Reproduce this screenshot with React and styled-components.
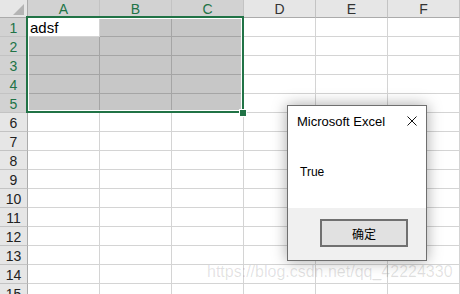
import React from 'react';
import styled, { createGlobalStyle } from 'styled-components';

const Global = createGlobalStyle`
  html, body { margin: 0; padding: 0; background: #fff; }
  body { overflow: hidden; }
`;

const GREEN = '#217346';

const Screen = styled.div`
  position: relative;
  width: 460px;
  height: 294px;
  overflow: hidden;
  background: #fff;
  font-family: "Liberation Sans", Arial, sans-serif;
`;

const SheetArea = styled.div`
  position: relative;
`;

const Sheet = styled.div`
  display: grid;
  grid-template-columns: 28px repeat(6, 72px);
  grid-template-rows: 18px;
  grid-auto-rows: 19px;
`;

const Corner = styled.div`
  box-sizing: border-box;
  background: #e6e6e6;
  border-right: 1px solid #ababab;
  border-bottom: 1px solid #ababab;
  display: flex;
  align-items: flex-end;
  justify-content: flex-end;
  padding: 0 3px 2px 0;
`;

const ColHead = styled.div`
  box-sizing: border-box;
  background: ${p => (p.$sel ? '#d2d2d2' : '#e6e6e6')};
  color: ${p => (p.$sel ? GREEN : '#333')};
  border-right: 1px solid #c3c3c3;
  border-bottom: 1px solid #ababab;
  display: flex;
  align-items: center;
  justify-content: center;
  font-size: 14px;
  line-height: 1;
  padding-top: 1px;
`;

const RowHead = styled.div`
  box-sizing: border-box;
  background: ${p => (p.$sel ? '#d2d2d2' : '#e6e6e6')};
  color: ${p => (p.$sel ? GREEN : '#222')};
  border-right: 1px solid #ababab;
  border-bottom: 1px solid #c3c3c3;
  display: flex;
  align-items: center;
  justify-content: center;
  font-size: 14px;
  line-height: 1;
  padding-top: 1px;
`;

const Cell = styled.div`
  box-sizing: border-box;
  background: #fff;
  border-right: 1px solid #d4d4d4;
  border-bottom: 1px solid #d4d4d4;
  display: flex;
  align-items: flex-end;
  padding: 0 0 1px 2px;
  font-size: 15px;
  line-height: 1;
  color: #000;
  position: ${p => (p.$active ? 'relative' : 'static')};
  z-index: ${p => (p.$active ? 2 : 'auto')};
`;

const Shade = styled.div`
  position: absolute;
  left: 26px;
  top: 16px;
  width: 218px;
  height: 97px;
  background: rgba(0, 0, 0, 0.22);
  z-index: 1;
`;

const Frame = styled.div`
  position: absolute;
  box-sizing: border-box;
  left: 26px;
  top: 16px;
  width: 218px;
  height: 97px;
  border: 2px solid ${GREEN};
  box-shadow: inset 0 0 0 1px #fff;
  z-index: 3;
`;

const Handle = styled.div`
  position: absolute;
  box-sizing: border-box;
  left: 239px;
  top: 109px;
  width: 8px;
  height: 8px;
  background: ${GREEN};
  border: 1px solid #fff;
  z-index: 4;
`;

const Dialog = styled.div`
  position: absolute;
  box-sizing: border-box;
  left: 287px;
  top: 105px;
  width: 140px;
  height: 156px;
  background: #fff;
  border: 1px solid #6f6f6f;
  box-shadow: 0 0 14px rgba(0, 0, 0, 0.35);
  display: flex;
  flex-direction: column;
  z-index: 5;
`;

const TitleBar = styled.div`
  height: 30px;
  display: flex;
  align-items: center;
  justify-content: space-between;
  padding: 0 9px 0 9px;
  font-size: 13px;
  color: #000;
`;

const Body = styled.div`
  height: 72px;
  display: flex;
  align-items: center;
  padding-left: 12px;
  font-size: 12px;
  color: #000;
`;

const Footer = styled.div`
  flex: 1;
  background: #f0f0f0;
  display: flex;
  justify-content: flex-end;
  align-items: flex-start;
  padding: 11px 18px 0 0;
`;

const Button = styled.div`
  box-sizing: border-box;
  width: 88px;
  height: 28px;
  background: #e1e1e1;
  border: 2px solid #707070;
  display: flex;
  align-items: center;
  justify-content: center;
  font-family: "Noto Sans CJK SC", sans-serif;
  font-size: 12px;
  color: #000;
`;

const Watermark = styled.div`
  position: absolute;
  left: 207px;
  top: 263px;
  font-size: 16px;
  line-height: 18px;
  color: rgba(0, 0, 0, 0.12);
  white-space: nowrap;
  z-index: 6;
`;

const cols = ['A', 'B', 'C', 'D', 'E', 'F'];
const rows = Array.from({ length: 15 }, (_, i) => i + 1);

export default function App() {
  return (
    <Screen>
      <Global />
      <SheetArea>
        <Sheet>
          <Corner>
            <svg width="11" height="11" viewBox="0 0 11 11">
              <polygon points="11,0 11,11 0,11" fill="#b4b4b4" />
            </svg>
          </Corner>
          {cols.map((c, i) => (
            <ColHead key={c} $sel={i < 3}>{c}</ColHead>
          ))}
          {rows.map(r => (
            <React.Fragment key={r}>
              <RowHead $sel={r <= 5}>{r}</RowHead>
              {cols.map(c => (
                <Cell key={c} $active={r === 1 && c === 'A'}>
                  {r === 1 && c === 'A' ? 'adsf' : ''}
                </Cell>
              ))}
            </React.Fragment>
          ))}
        </Sheet>
        <Shade />
        <Frame />
        <Handle />
      </SheetArea>
      <Dialog>
        <TitleBar>
          <span>Microsoft Excel</span>
          <svg width="10" height="10" viewBox="0 0 10 10">
            <path d="M0.5 0.5 L9.5 9.5 M9.5 0.5 L0.5 9.5" stroke="#111" strokeWidth="1" fill="none" />
          </svg>
        </TitleBar>
        <Body>True</Body>
        <Footer>
          <Button>确定</Button>
        </Footer>
      </Dialog>
      <Watermark>https://blog.csdn.net/qq_42224330</Watermark>
    </Screen>
  );
}
